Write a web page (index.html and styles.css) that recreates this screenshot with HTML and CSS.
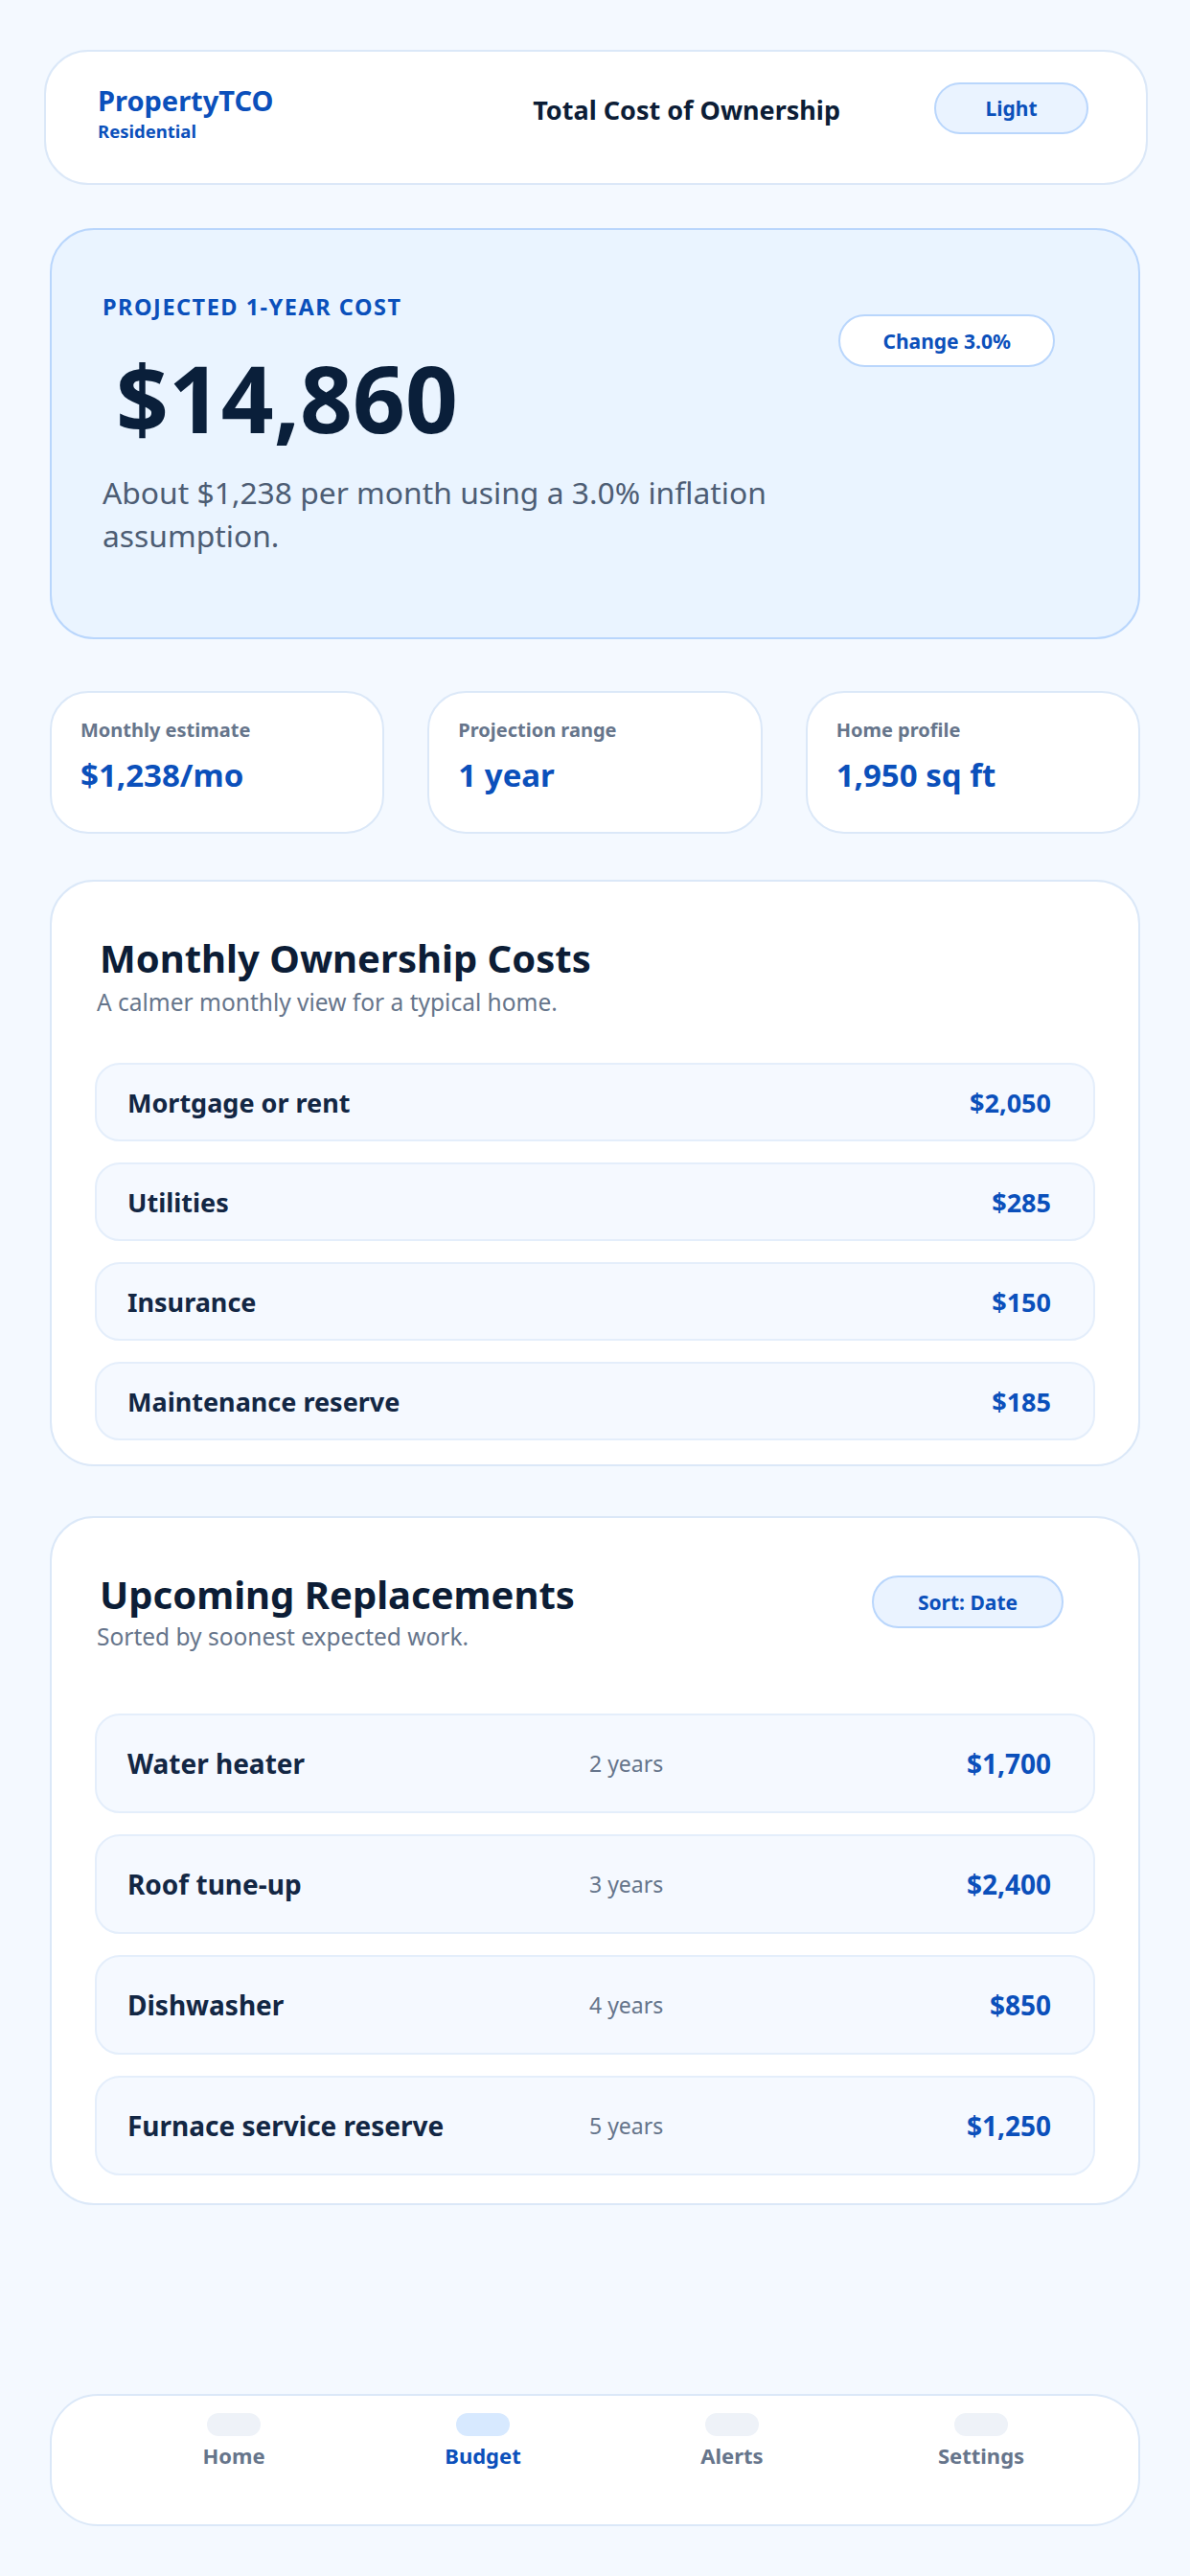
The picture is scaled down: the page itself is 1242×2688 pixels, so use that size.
FILE: index.html
```html
<!DOCTYPE html>
<html lang="en">
<head>
  <meta charset="UTF-8">
  <meta name="viewport" content="width=device-width, initial-scale=1.0">
  <title>PropertyTCO</title>
  <link rel="stylesheet" href="styles.css">
</head>
<body>
  <div class="page">
    <header class="topbar">
      <div class="brand">
        <div class="brand_name">PropertyTCO</div>
        <div class="brand_tag">Residential</div>
      </div>
      <div class="topbar_title">Total Cost of Ownership</div>
      <button class="pill pill_soft topbar_btn">Light</button>
    </header>

    <main class="main">
      <section class="hero">
        <div class="hero_text">
          <div class="hero_label">Projected 1-year cost</div>
          <div class="hero_value">$14,860</div>
          <p class="hero_sub">About $1,238 per month using a 3.0% inflation assumption.</p>
        </div>
        <button class="pill pill_white hero_btn">Change 3.0%</button>
      </section>

      <section class="stats">
        <div class="stat">
          <div class="stat_label">Monthly estimate</div>
          <div class="stat_value">$1,238/mo</div>
        </div>
        <div class="stat">
          <div class="stat_label">Projection range</div>
          <div class="stat_value">1 year</div>
        </div>
        <div class="stat">
          <div class="stat_label">Home profile</div>
          <div class="stat_value">1,950 sq ft</div>
        </div>
      </section>

      <section class="card card_costs">
        <div class="card_head">
          <div>
            <h2 class="card_title">Monthly Ownership Costs</h2>
            <p class="card_sub">A calmer monthly view for a typical home.</p>
          </div>
        </div>
        <div class="list">
          <div class="row"><span class="row_name">Mortgage or rent</span><span class="row_price">$2,050</span></div>
          <div class="row"><span class="row_name">Utilities</span><span class="row_price">$285</span></div>
          <div class="row"><span class="row_name">Insurance</span><span class="row_price">$150</span></div>
          <div class="row"><span class="row_name">Maintenance reserve</span><span class="row_price">$185</span></div>
        </div>
      </section>

      <section class="card card_repl">
        <div class="card_head">
          <div>
            <h2 class="card_title">Upcoming Replacements</h2>
            <p class="card_sub">Sorted by soonest expected work.</p>
          </div>
          <button class="pill pill_soft sort_btn">Sort: Date</button>
        </div>
        <div class="list">
          <div class="row row_tall"><span class="row_name">Water heater</span><span class="row_when">2 years</span><span class="row_price">$1,700</span></div>
          <div class="row row_tall"><span class="row_name">Roof tune-up</span><span class="row_when">3 years</span><span class="row_price">$2,400</span></div>
          <div class="row row_tall"><span class="row_name">Dishwasher</span><span class="row_when">4 years</span><span class="row_price">$850</span></div>
          <div class="row row_tall"><span class="row_name">Furnace service reserve</span><span class="row_when">5 years</span><span class="row_price">$1,250</span></div>
        </div>
      </section>

      <nav class="tabbar">
        <div class="tab"><span class="tab_icon"></span><span class="tab_text">Home</span></div>
        <div class="tab tab_on"><span class="tab_icon"></span><span class="tab_text">Budget</span></div>
        <div class="tab"><span class="tab_icon"></span><span class="tab_text">Alerts</span></div>
        <div class="tab"><span class="tab_icon"></span><span class="tab_text">Settings</span></div>
      </nav>
    </main>
  </div>
</body>
</html>
```

FILE: styles.css
```css
* {
  margin: 0;
  padding: 0;
  box-sizing: border-box;
}
/* 全局颜色 */
:root {
  --bg: #f4f9ff;
  --blue: #0b50bb;
  --navy: #0c1d36;
  --slate: #4d5d74;
  --gray: #66758b;
  --line: #dbe8f8;
  --line2: #b9d6fc;
}
body {
  background-color: var(--bg);
  font-family: "Noto Sans", "Open Sans", sans-serif;
  color: var(--navy);
}
.page {
  padding: 52px 44px 40px 46px;
}
button {
  font-family: inherit;
  cursor: pointer;
}
/* 顶部栏 */
.topbar {
  display: flex;
  align-items: flex-start;
  height: 141px;
  padding: 32px 60px 0 54px;
  background-color: #fff;
  border: 2px solid var(--line);
  border-radius: 46px;
}
.brand_name {
  font-size: 29px;
  line-height: 38px;
  font-weight: 700;
  color: var(--blue);
}
.brand_tag {
  margin-top: 1px;
  font-size: 18.5px;
  line-height: 24px;
  font-weight: 700;
  color: var(--blue);
}
.topbar_title {
  margin: 10px 98px 0 auto;
  font-size: 27px;
  line-height: 38px;
  font-weight: 700;
  color: var(--navy);
}
.pill {
  height: 55px;
  border-radius: 28px;
  border: 2px solid var(--line2);
  font-size: 21px;
  font-weight: 700;
  color: var(--blue);
}
.pill_soft {
  background-color: #eaf3ff;
}
.pill_white {
  background-color: #fff;
}
.topbar_btn {
  width: 161px;
  height: 54px;
  margin-top: 0;
}
.main {
  padding: 0 8px 0 6px;
}
/* 主卡片 */
.hero {
  display: flex;
  align-items: flex-start;
  justify-content: space-between;
  height: 429px;
  margin-top: 45px;
  padding: 64px 87px 0 53px;
  background-color: #eaf4ff;
  border: 2px solid var(--line2);
  border-radius: 46px;
}
.hero_label {
  font-size: 23.5px;
  line-height: 32px;
  font-weight: 700;
  letter-spacing: 1.5px;
  text-transform: uppercase;
  color: var(--blue);
}
.hero_value {
  margin-top: 26px;
  padding-left: 14px;
  font-size: 96px;
  line-height: 106px;
  font-weight: 700;
  color: #0a1f3a;
}
.hero_sub {
  max-width: 780px;
  margin-top: 23px;
  font-size: 31.8px;
  line-height: 45px;
  color: var(--slate);
}
.hero_btn {
  width: 229px;
  margin-top: 24px;
}
/* 三个小卡片 */
.stats {
  display: grid;
  grid-template-columns: repeat(3, 1fr);
  gap: 45px;
  margin-top: 54px;
}
.stat {
  height: 149px;
  padding: 25px 30px 0;
  background-color: #fff;
  border: 2px solid var(--line);
  border-radius: 40px;
}
.stat_label {
  font-size: 20px;
  line-height: 28px;
  font-weight: 700;
  color: var(--gray);
}
.stat_value {
  margin-top: 11px;
  font-size: 33px;
  line-height: 44px;
  font-weight: 700;
  color: var(--blue);
}
/* 列表卡片 */
.card {
  margin-top: 48px;
  padding: 54px 45px 25px;
  background-color: #fff;
  border: 2px solid var(--line);
  border-radius: 46px;
}
.card_repl {
  margin-top: 52px;
  padding-bottom: 29px;
}
.card_head {
  display: flex;
  justify-content: space-between;
  align-items: flex-start;
  padding-left: 5px;
}
.card_title {
  font-size: 40px;
  line-height: 52px;
  font-weight: 700;
  color: var(--navy);
}
.card_sub {
  margin-top: 4px;
  margin-left: -3px;
  font-size: 24.5px;
  line-height: 32px;
  color: var(--gray);
}
.card_repl .card_sub {
  margin-top: 2px;
}
.sort_btn {
  width: 200px;
  margin: 6px 33px 0 0;
}
.list {
  display: flex;
  flex-direction: column;
  gap: 22px;
  margin-top: 47px;
}
.card_repl .list {
  margin-top: 64px;
}
.row {
  display: flex;
  align-items: center;
  justify-content: space-between;
  height: 82px;
  padding: 0 44px 0 32px;
  background-color: #f5f9ff;
  border: 2px solid #e4eefb;
  border-radius: 26px;
}
.row_name {
  font-size: 27px;
  font-weight: 700;
  color: #132744;
}
.row_price {
  font-size: 27px;
  font-weight: 700;
  color: var(--blue);
}
/* 替换列表：名称、年份、价格三列 */
.row_tall {
  display: grid;
  grid-template-columns: 2fr 1fr 1fr;
  height: 104px;
}
.row_tall .row_name,
.row_tall .row_price {
  font-size: 28px;
}
.row_when {
  font-size: 23px;
  color: var(--gray);
}
.row_tall .row_price {
  text-align: right;
}
/* 底部导航 */
.tabbar {
  display: grid;
  grid-template-columns: repeat(4, 1fr);
  height: 138px;
  margin-top: 197px;
  padding: 18px 34px 0 60px;
  background-color: #fff;
  border: 2px solid var(--line);
  border-radius: 50px;
}
.tab {
  display: flex;
  flex-direction: column;
  align-items: center;
}
.tab_icon {
  width: 56px;
  height: 24px;
  border-radius: 12px;
  background-color: #eef2f8;
}
.tab_text {
  margin-top: 5px;
  font-size: 22px;
  line-height: 30px;
  font-weight: 700;
  color: var(--gray);
}
.tab_on .tab_icon {
  background-color: #d7e9ff;
}
.tab_on .tab_text {
  color: var(--blue);
}
```
